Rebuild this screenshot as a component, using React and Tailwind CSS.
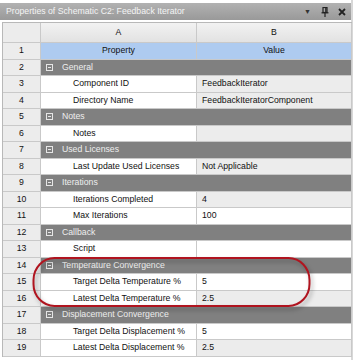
import React from 'react';

const rows = [
    { n: 2, group: 'General' },
    { n: 3, prop: 'Component ID', value: 'FeedbackIterator', ro: true },
    { n: 4, prop: 'Directory Name', value: 'FeedbackIteratorComponent', ro: true },
    { n: 5, group: 'Notes' },
    { n: 6, prop: 'Notes', value: '', ro: true },
    { n: 7, group: 'Used Licenses' },
    { n: 8, prop: 'Last Update Used Licenses', value: 'Not Applicable', ro: true },
    { n: 9, group: 'Iterations' },
    { n: 10, prop: 'Iterations Completed', value: '4', ro: true },
    { n: 11, prop: 'Max Iterations', value: '100' },
    { n: 12, group: 'Callback' },
    { n: 13, prop: 'Script', value: '' },
    { n: 14, group: 'Temperature Convergence' },
    { n: 15, prop: 'Target Delta Temperature %', value: '5' },
    { n: 16, prop: 'Latest Delta Temperature %', value: '2.5', ro: true },
    { n: 17, group: 'Displacement Convergence' },
    { n: 18, prop: 'Target Delta Displacement %', value: '5' },
    { n: 19, prop: 'Latest Delta Displacement %', value: '2.5', ro: true },
];

const NumCell = ({ children, tall }) => (
    <div className={`${tall ? 'h-[20px]' : 'h-[16.5px]'} flex items-center justify-center bg-[#ececec] border-r border-b border-[#c9c9c9] text-[#111]`}>
        {children}
    </div>
);

const Collapse = () => (
    <span className="w-[7px] h-[7px] border border-[#e6e6e6] flex items-center justify-center mr-[9px]">
        <span className="w-[3px] h-px bg-[#e6e6e6]" />
    </span>
);

const PropertiesPanel = () => {
    return (
        <div className="w-[357px] h-[360px] bg-white relative overflow-hidden font-['Liberation_Sans',Arial,sans-serif] text-[8.7px] leading-none">
            <div className="w-[353px] h-full border-r-[2px] border-[#d8d8d8]">
                <div className="pt-[3px]">
                    <div className="h-[17px] bg-gradient-to-b from-[#b2b2b2] to-[#999999] flex items-center pl-[6px] pr-[5px] text-[#f4f4f4]">
                        <span className="flex-1">Properties of Schematic C2: Feedback Iterator</span>
                        <span className="text-[7px] text-[#333] mr-[10px]">▼</span>
                        <svg width="8" height="10" viewBox="0 0 8 10" className="mr-[9px]">
                            <rect x="2" y="0.5" width="4" height="5" fill="none" stroke="#222" strokeWidth="1.2" />
                            <rect x="4.2" y="1" width="1.3" height="4.5" fill="#222" />
                            <line x1="0.5" y1="5.8" x2="7.5" y2="5.8" stroke="#222" strokeWidth="1.2" />
                            <line x1="4" y1="6" x2="4" y2="10" stroke="#222" strokeWidth="1.2" />
                        </svg>
                        <svg width="8" height="8" viewBox="0 0 8 8">
                            <path d="M1 1 L7 7 M7 1 L1 7" stroke="#222" strokeWidth="1.8" />
                        </svg>
                    </div>
                </div>
                <div className="mt-[2px] ml-[2px] w-[350px] border-l border-t border-[#b8b8b8] grid grid-cols-[38px_156px_155px]">
                    <NumCell tall />
                    <div className="h-[20px] flex items-center justify-center bg-gradient-to-b from-[#f2f2f2] to-[#e2e2e2] border-r border-b border-[#c9c9c9] text-[#111]">A</div>
                    <div className="h-[20px] flex items-center justify-center bg-gradient-to-b from-[#f2f2f2] to-[#e2e2e2] border-r border-b border-[#c9c9c9] text-[#111]">B</div>

                    <NumCell>1</NumCell>
                    <div className="h-[16.5px] flex items-center justify-center bg-[#aecbf0] border-r border-b border-[#c9c9c9] text-[#111]">Property</div>
                    <div className="h-[16.5px] flex items-center justify-center bg-[#aecbf0] border-r border-b border-[#c9c9c9] text-[#111]">Value</div>

                    {rows.map((row) =>
                        row.group ? (
                            <React.Fragment key={row.n}>
                                <NumCell>{row.n}</NumCell>
                                <div className="col-span-2 h-[16.5px] flex items-center pl-[5px] bg-[#808080] border-r border-b border-[#c9c9c9] text-[#eeeeee]">
                                    <Collapse />
                                    {row.group}
                                </div>
                            </React.Fragment>
                        ) : (
                            <React.Fragment key={row.n}>
                                <NumCell>{row.n}</NumCell>
                                <div className="h-[16.5px] flex items-center pl-[32px] bg-white border-r border-b border-[#c9c9c9] text-[#111] whitespace-nowrap overflow-hidden">
                                    {row.prop}
                                </div>
                                <div className={`h-[16.5px] flex items-center pl-[5px] border-r border-b border-[#c9c9c9] text-[#111] ${row.ro ? 'bg-[#ececec]' : 'bg-white'}`}>
                                    {row.value}
                                </div>
                            </React.Fragment>
                        )
                    )}
                </div>
            </div>

            <svg className="absolute left-0 top-0 pointer-events-none drop-shadow-[2px_3px_2px_rgba(0,0,0,0.3)]" width="357" height="360">
                <rect x="33.5" y="258" width="276" height="48" rx="21" ry="22" fill="none" stroke="#b0141f" strokeWidth="2" />
            </svg>
        </div>
    );
};

export default PropertiesPanel;
